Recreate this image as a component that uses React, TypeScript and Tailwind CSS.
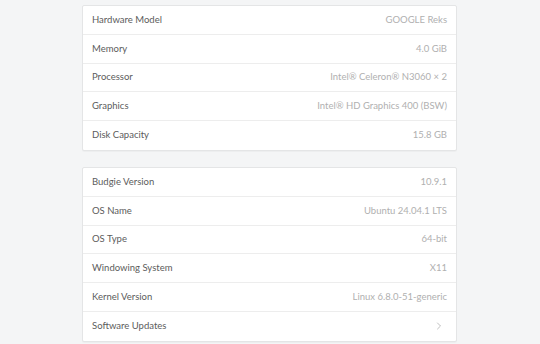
import { ChevronRight } from 'lucide-react';

interface InfoRow {
  label: string;
  value?: string;
  link?: boolean;
}

const hardware: InfoRow[] = [
  { label: 'Hardware Model', value: 'GOOGLE Reks' },
  { label: 'Memory', value: '4.0 GiB' },
  { label: 'Processor', value: 'Intel® Celeron® N3060 × 2' },
  { label: 'Graphics', value: 'Intel® HD Graphics 400 (BSW)' },
  { label: 'Disk Capacity', value: '15.8 GB' },
];

const software: InfoRow[] = [
  { label: 'Budgie Version', value: '10.9.1' },
  { label: 'OS Name', value: 'Ubuntu 24.04.1 LTS' },
  { label: 'OS Type', value: '64-bit' },
  { label: 'Windowing System', value: 'X11' },
  { label: 'Kernel Version', value: 'Linux 6.8.0-51-generic' },
  { label: 'Software Updates', link: true },
];

function InfoCard({ rows }: { rows: InfoRow[] }) {
  return (
    <div className="bg-white border border-[#e4e5e6] rounded-[2px] shadow-[0_1px_1px_rgba(0,0,0,0.03)]">
      {rows.map(({ label, value, link }) => (
        <div
          key={label}
          className="h-[28.8px] flex items-center justify-between pl-[9px] pr-[9px] border-b border-[#ededed] last:border-b-0"
        >
          <span className="text-[#5c5c5c]">{label}</span>
          {link ? (
            <ChevronRight size={12} strokeWidth={1.2} className="text-[#959595] mr-[2px]" aria-hidden="true" />
          ) : (
            <span className="text-[#b0b0b0]">{value}</span>
          )}
        </div>
      ))}
    </div>
  );
}

export default function App() {
  return (
    <div className="w-[540px] h-[344px] overflow-hidden bg-[#f4f5f6] pt-[5px] font-['Lato',sans-serif] text-[9.5px]">
      <div className="w-[375px] ml-[82px] flex flex-col gap-[16px]">
        <InfoCard rows={hardware} />
        <InfoCard rows={software} />
      </div>
    </div>
  );
}
